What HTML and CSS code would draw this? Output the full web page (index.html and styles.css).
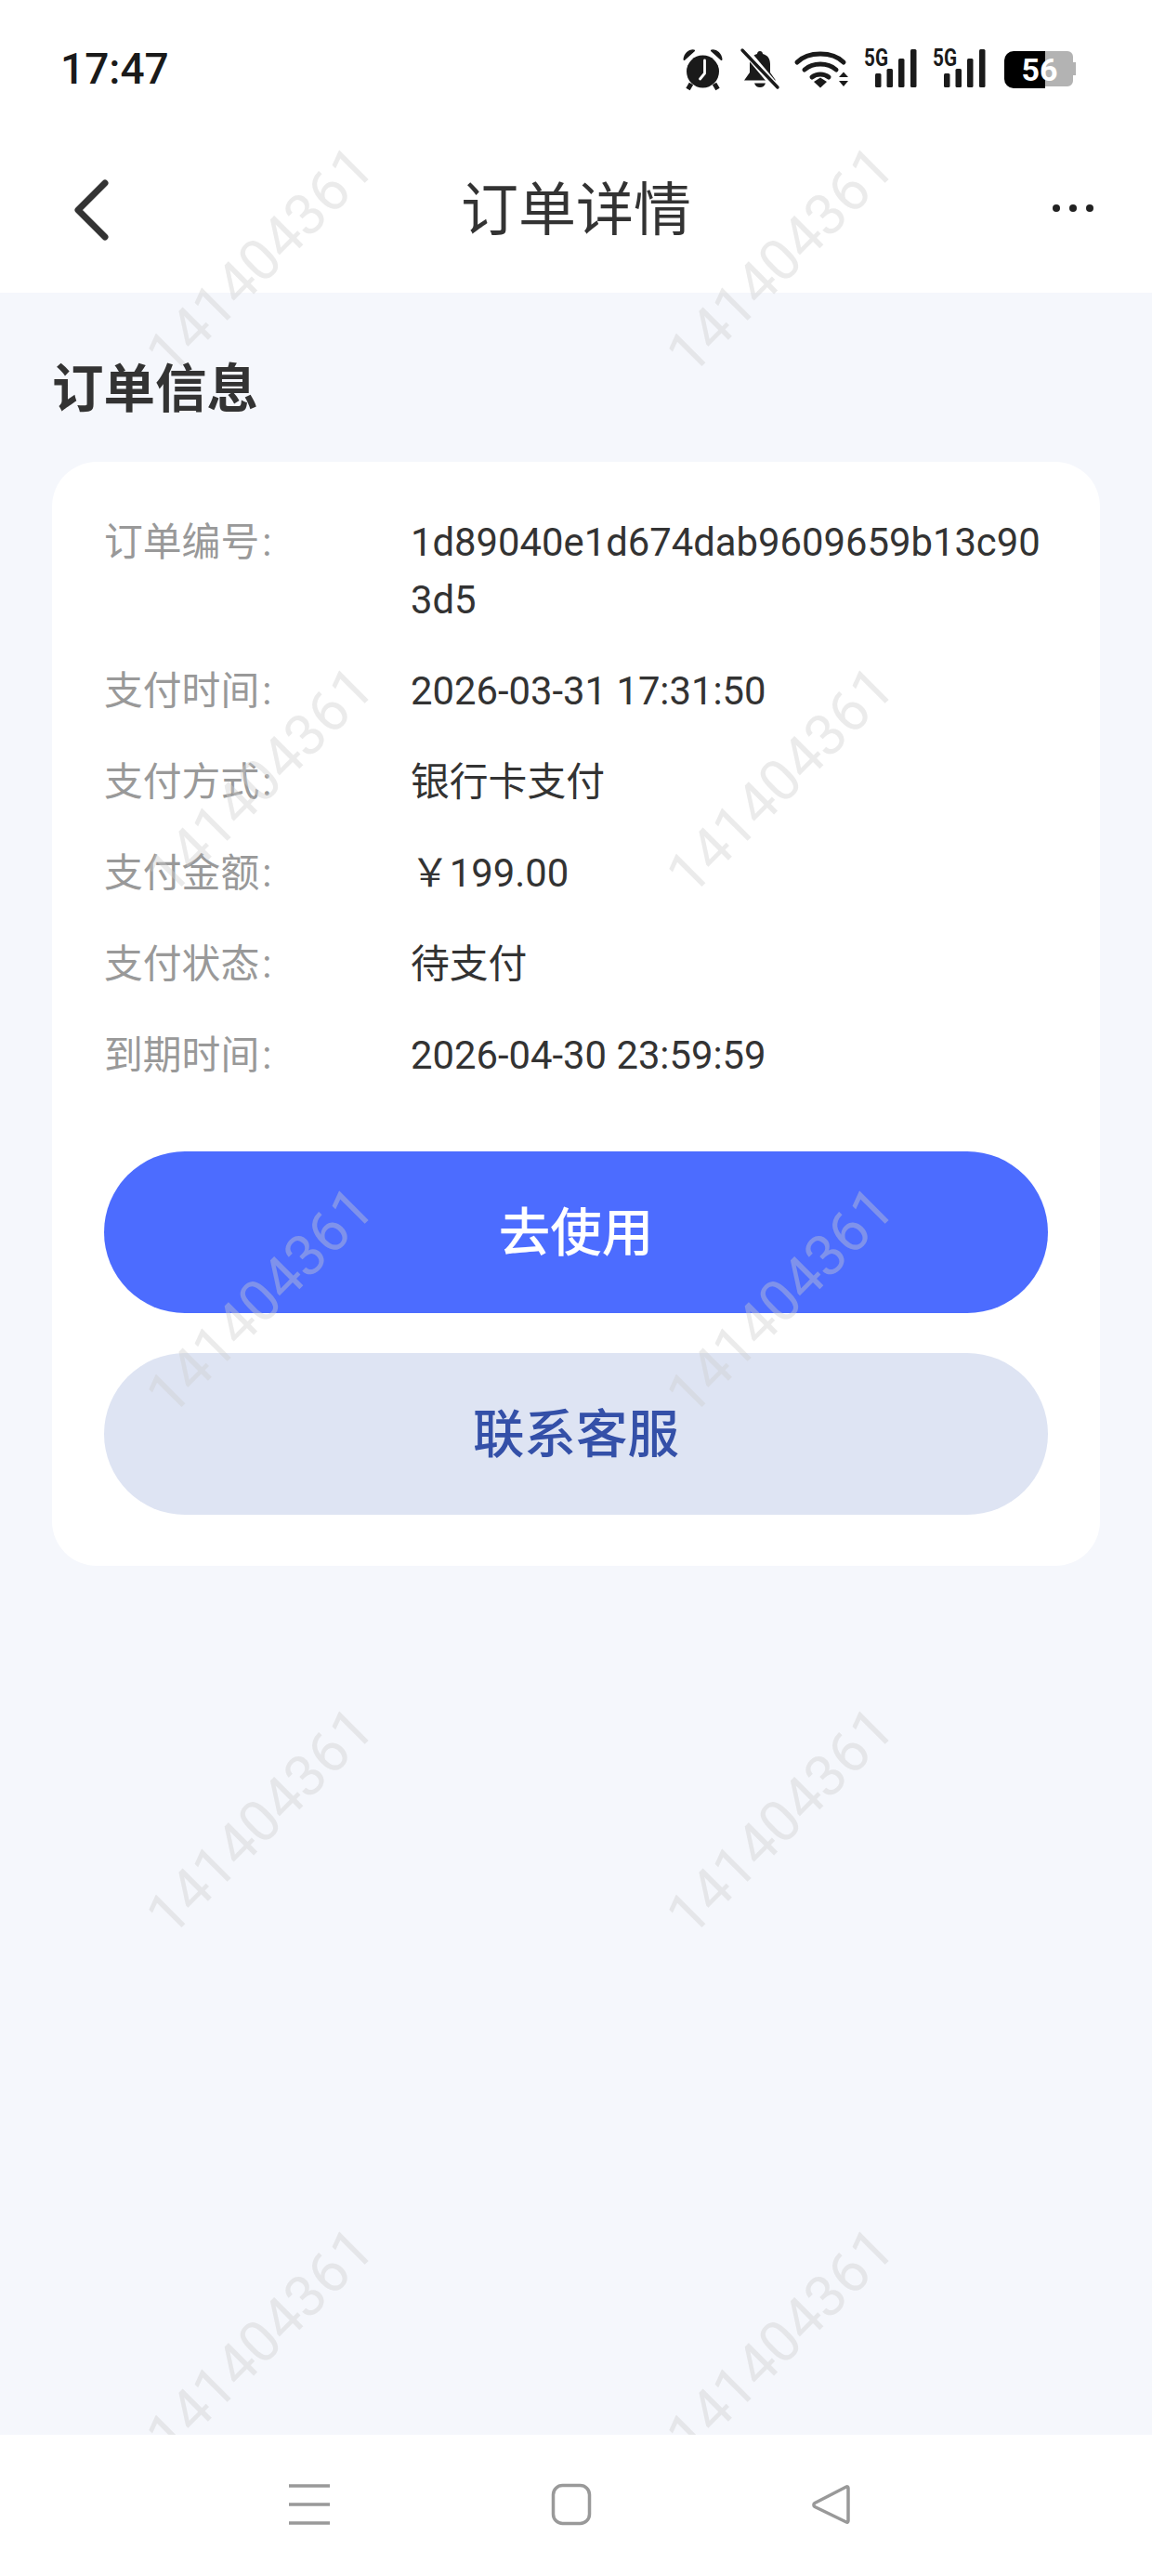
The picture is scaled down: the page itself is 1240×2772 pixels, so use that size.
FILE: index.html
```html
<!DOCTYPE html>
<html lang="zh-CN">
<head>
<meta charset="utf-8">
<title>订单详情</title>
<link rel="stylesheet" href="styles.css">
</head>
<body>
<div class="page">
  <div class="statusbar">
    <span class="clock">17:47</span>
    <div class="status-icons">
      <svg width="46" height="44" viewBox="0 0 46 44">
        <circle cx="21.500" cy="25" r="17.500" fill="#1a1a1a"/>
        <path d="M1.500 12C2 6 6.500 1.500 12 2.500Z M41.500 12C41 6 36.500 1.500 31 2.500Z" fill="#1a1a1a" stroke="#1a1a1a" stroke-width="2" stroke-linejoin="round"/>
        <path d="M9 38l-3.500 6M34 38l3.500 6" stroke="#1a1a1a" stroke-width="5"/>
        <path d="M23.500 13v14L18.500 33" fill="none" stroke="#fff" stroke-width="2.800" stroke-linecap="round" stroke-linejoin="round"/>
      </svg>
      <svg width="42" height="44" viewBox="0 0 42 44">
        <path d="M21 3c2 0 3 1.500 3 3 6 1.500 8 6 8 11v9l6 8.500H4L10 26v-9c0-5 2-9.500 8-11 0-1.500 1-3 3-3Z" fill="#1a1a1a"/>
        <path d="M15 37.500h12c-1 3-3 4.500-6 4.500s-5-1.500-6-4.500Z" fill="#1a1a1a"/>
        <path d="M3 0l37 44" stroke="#fff" stroke-width="8"/>
        <path d="M2 2l38 40" stroke="#1a1a1a" stroke-width="3.400" stroke-linecap="round"/>
      </svg>
      <svg width="59" height="44" viewBox="0 0 59 44">
        <path d="M3 15C15 3 41 3 53 15" fill="none" stroke="#1a1a1a" stroke-width="5" stroke-linecap="round"/>
        <path d="M11 23c9-8 25-8 34 0" fill="none" stroke="#1a1a1a" stroke-width="5" stroke-linecap="round"/>
        <path d="M19 31c5-4 13-4 18 0" fill="none" stroke="#1a1a1a" stroke-width="5" stroke-linecap="round"/>
        <path d="M21 36l7-4.500 7 4.500-7 6.500Z" fill="#1a1a1a"/>
        <path d="M48 31l5-5.500 5 5.500ZM48 35h10l-5 6Z" fill="#1a1a1a"/>
      </svg>
      <svg width="58" height="44" viewBox="0 0 58 44">
        <text x="0" y="19" class="fiveg" textLength="26" lengthAdjust="spacingAndGlyphs">5G</text>
        <rect x="12" y="27" width="6.500" height="15" rx="1.500" fill="#1a1a1a"/>
        <rect x="24.500" y="22" width="6.500" height="20" rx="1.500" fill="#1a1a1a"/>
        <rect x="37" y="11" width="6.500" height="31" rx="1.500" fill="#1a1a1a"/>
        <rect x="50" y="1" width="6.500" height="41" rx="1.500" fill="#1a1a1a"/>
      </svg>
      <svg width="58" height="44" viewBox="0 0 58 44">
        <text x="0" y="19" class="fiveg" textLength="26" lengthAdjust="spacingAndGlyphs">5G</text>
        <rect x="12" y="27" width="6.500" height="15" rx="1.500" fill="#1a1a1a"/>
        <rect x="24.500" y="22" width="6.500" height="20" rx="1.500" fill="#1a1a1a"/>
        <rect x="37" y="11" width="6.500" height="31" rx="1.500" fill="#1a1a1a"/>
        <rect x="50" y="1" width="6.500" height="41" rx="1.500" fill="#1a1a1a"/>
      </svg>
      <svg width="81" height="44" viewBox="-3 0 81 44">
        <path d="M44 3h24a6 6 0 0 1 6 6v6h3v14h-3v6a6 6 0 0 1-6 6H44Z" fill="#b3b3b3"/>
        <path d="M44 3H10A10 10 0 0 0 0 13v20a10 10 0 0 0 10 10h34Z" fill="#000"/>
        <text x="38" y="35" class="batt">56</text>
      </svg>
    </div>
  </div>

  <header class="topbar">
    <div class="topbar-left">
      <svg width="60" height="70" viewBox="0 0 60 70"><path d="M53 6L24 35l29 29" fill="none" stroke="#333" stroke-width="7" stroke-linecap="round" stroke-linejoin="round"/></svg>
    </div>
    <h1 class="topbar-title">订单详情</h1>
    <div class="topbar-right">
      <svg class="dots" width="48" height="12" viewBox="0 0 48 12"><circle cx="5" cy="6" r="4" fill="#222"/><circle cx="23" cy="6" r="4" fill="#222"/><circle cx="41" cy="6" r="4" fill="#222"/></svg>
    </div>
  </header>

  <main class="content">
    <h2 class="section-title">订单信息</h2>
    <section class="card">
      <dl class="rows">
        <div class="row"><dt>订单编号<span class="colon">:</span></dt><dd>1d89040e1d674dab9609659b13c903d5</dd></div>
        <div class="row"><dt>支付时间<span class="colon">:</span></dt><dd>2026-03-31 17:31:50</dd></div>
        <div class="row"><dt>支付方式<span class="colon">:</span></dt><dd>银行卡支付</dd></div>
        <div class="row"><dt>支付金额<span class="colon">:</span></dt><dd>￥199.00</dd></div>
        <div class="row"><dt>支付状态<span class="colon">:</span></dt><dd>待支付</dd></div>
        <div class="row"><dt>到期时间<span class="colon">:</span></dt><dd>2026-04-30 23:59:59</dd></div>
      </dl>
      <div class="actions">
        <button class="btn btn-primary">去使用</button>
        <button class="btn btn-soft">联系客服</button>
      </div>
    </section>
  </main>

  <nav class="navbar">
    <svg width="46" height="46" viewBox="0 0 46 46"><path d="M1 3h44M1 23h44M1 43h44" stroke="#999" stroke-width="3.500"/></svg>
    <svg width="44" height="46" viewBox="0 0 44 46"><rect x="2.500" y="2.500" width="39" height="41" rx="10" fill="none" stroke="#999" stroke-width="3.500"/></svg>
    <svg width="42" height="46" viewBox="0 0 42 46"><path d="M38 4c1-.500 2 0 2 1.500v35c0 1.500-1 2-2 1.500L4 25.500c-1.500-1-1.500-3 0-4Z" fill="none" stroke="#999" stroke-width="3.500" stroke-linejoin="round"/></svg>
  </nav>

  <div class="watermarks" aria-hidden="true">
    <span class="wm">141404361</span><span class="wm">141404361</span>
    <span class="wm">141404361</span><span class="wm">141404361</span>
    <span class="wm">141404361</span><span class="wm">141404361</span>
    <span class="wm">141404361</span><span class="wm">141404361</span>
    <span class="wm">141404361</span><span class="wm">141404361</span>
  </div>
</div>
</body>
</html>
```
FILE: styles.css
```css
* { box-sizing: border-box; }
html, body { margin: 0; padding: 0; }
body {
  font-family: Roboto, "Noto Sans CJK SC", sans-serif;
  color: #333;
  background: #f5f7fc;
}
.page {
  position: relative;
  width: 1240px;
  height: 2772px;
  display: flex;
  flex-direction: column;
  overflow: hidden;
}
.statusbar {
  height: 137px;
  flex: none;
  background: #fff;
  display: flex;
  justify-content: space-between;
  align-items: flex-start;
  padding: 52px 81px 0 65px;
}
.clock {
  font-size: 46px;
  line-height: 44px;
  font-weight: 500;
  color: #1a1a1a;
}
.status-icons { display: flex; align-items: flex-start; gap: 16px; }
.status-icons svg { display: block; overflow: visible; }
.fiveg {
  font-family: "Roboto", sans-serif;
  font-size: 25px;
  font-weight: 700;
  fill: #1a1a1a;
}
.batt {
  font-family: "Roboto", sans-serif;
  font-size: 34px;
  font-weight: 700;
  text-anchor: middle;
  fill: #fff;
}
.topbar {
  height: 178px;
  flex: none;
  background: #fff;
  display: grid;
  grid-template-columns: 1fr auto 1fr;
  align-items: center;
  padding: 0 60px;
}
.topbar-left svg, .topbar-right svg { display: block; }
.topbar-right { display: flex; justify-content: flex-end; }
.dots { margin-bottom: 4px; }
.topbar-title {
  margin: 0;
  padding-top: 2px;
  font-size: 62px;
  line-height: 80px;
  font-weight: 400;
  color: #333;
}
.content {
  flex: 1;
  padding: 70px 56px 0;
}
.section-title {
  margin: 0 0 42px;
  font-size: 55.5px;
  line-height: 70px;
  font-weight: 700;
  color: #333;
}
.card {
  background: #fff;
  border-radius: 48px;
  padding: 56px 56px 55px;
}
.rows { margin: 0; display: flex; flex-direction: column; gap: 36px; }
.row {
  display: grid;
  grid-template-columns: 330px 1fr;
  font-size: 41.8px;
  line-height: 62px;
}
.row dt { color: #999; }
.row dd { margin: 0; color: #333; word-break: break-all; }
.colon { margin-left: 3px; }
.actions { margin-top: 72px; display: flex; flex-direction: column; gap: 43px; }
.btn {
  display: block;
  width: 100%;
  height: 174px;
  padding: 0 0 8px;
  border: 0;
  border-radius: 87px;
  font-family: inherit;
  font-size: 55.5px;
}
.btn-primary { background: #4c6cff; color: #fff; font-weight: 500; }
.btn-soft { background: #dee4f3; color: #3450a8; font-weight: 500; }
.navbar {
  height: 152px;
  flex: none;
  background: #fff;
  display: flex;
  justify-content: space-between;
  align-items: flex-start;
  padding: 52px 325px 0 310px;
}
.navbar svg { display: block; }
.watermarks {
  position: absolute;
  left: 0;
  top: 0;
  width: 1240px;
  height: 2620px;
  overflow: hidden;
  pointer-events: none;
  display: grid;
  grid-template-columns: 560px 560px;
  grid-auto-rows: 560px;
}
.wm {
  place-self: center;
  transform: rotate(-45deg);
  font-size: 62px;
  line-height: 80px;
  color: rgba(205, 205, 205, 0.4);
}
```
